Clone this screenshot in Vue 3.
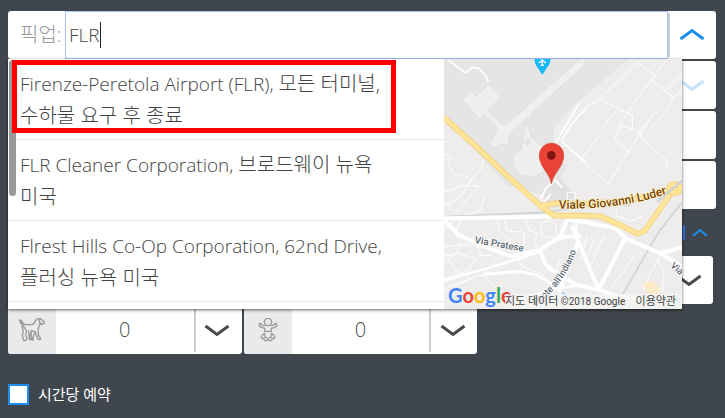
<script setup>
import { ref } from 'vue'

const query = ref('FLR')
const hourly = ref(false)
const places = [
  { name: 'Firenze-Peretola Airport (FLR),', detail: '모든 터미널, 수하물 요구 후 종료' },
  { name: 'FLR Cleaner Corporation,', detail: '브로드웨이 뉴욕 미국' },
  { name: 'Flrest Hills Co-Op Corporation, 62nd Drive,', detail: '플러싱 뉴욕 미국' },
]
</script>

<template>
  <main class="booking">
    <div class="rows">
      <div class="row pickup">
        <label class="caption" for="pickup">픽업:</label>
        <div class="field">
          <input id="pickup" v-model="query" type="text" autocomplete="off" />
          <span class="caret"></span>
        </div>
        <button class="toggle blue" type="button" aria-label="접기">
          <svg class="chevron" viewBox="0 0 26 14"><path d="M1.5 11 13 2.5 24.500 11" /></svg>
        </button>

        <div class="dropdown">
          <ul class="places">
            <li v-for="(place, i) in places" :key="place.name" :class="{ marked: i === 0 }">
              <a href="#">{{ place.name }} <span class="detail">{{ place.detail }}</span></a>
            </li>
          </ul>
          <span class="thumb"></span>
          <div class="map">
            <svg class="canvas" viewBox="0 0 714 750" preserveAspectRatio="xMidYMid slice">
              <rect width="714" height="750" fill="#eeedec" />
              <!-- airfield -->
              <path d="M0 0H555L408 122 330 205 330 300 372 318 355 352 300 410 190 380 0 180Z" fill="#e5e5e5" />
              <path d="M300 400 340 350 395 410 345 445 300 450Z" fill="#e1e1e1" />
              <g fill="#efefef" stroke="#d9d9d9" stroke-width="2">
                <path d="M408 0 190 194 170 194 132 154 142 144 171 114 135 76 96 112 80 97 56 122 106 180 122 168 160 206 143 246 131 252 148 266 175 256 194 255 210 286 208 318 230 350 278 352 318 322 319 285 300 266 262 235 250 195 267 158 423 17V0Z" />
                <path d="M252 174 196 226 196 255 214 284 232 272 238 230Z" fill="#e5e5e5" />
                <path d="M250 238 244 252 252 260 256 246Z" fill="#e5e5e5" />
              </g>
              <path d="M12 3 64 41 85 26 105 28 126 51 133 70M335 252 406 133M353 248Q380 188 425 152M353 248 425 310" class="lane wide" />
              <!-- side streets -->
              <path class="lane" d="M0 285 20 293 14 322 34 350 60 345 75 361M118 300 113 330 90 350 72 378 45 418 0 440M0 400 60 378 105 382 35 460 0 425M145 390 120 415 110 455 70 470M0 510 50 470 80 462M0 562 80 557 140 540M55 475 35 520 52 560 30 590 10 600 30 630 80 660M0 592 40 582 95 600 72 635 0 660M100 558 110 590 140 588 160 600M160 482 168 520 200 546M180 480 190 515 240 520 242 555M245 478 255 515 280 522 270 555 285 575M220 590 232 622 300 650M40 680 100 650 240 640M150 605 120 650 170 700M0 690 90 655" />
              <path class="lane" d="M408 155 466 120 581 11 630 47M662 8 555 153 520 210M621 60 690 117 714 90M670 90 714 43M690 117 670 155 615 213M466 120 565 170 565 212M515 155 470 213M408 305 462 235M414 303 493 377 552 278 640 150M560 282 510 239 532 200 580 215 610 255 673 308 662 332M610 188 580 225M370 430 370 400 394 400 394 430M520 450 515 470 560 487 600 470" />
              <path class="lane" d="M295 490Q335 478 338 510Q335 548 300 532Q280 510 300 492M310 550 360 540 350 500M350 600 335 640M400 480 450 500 530 512M430 530 410 600M450 540 425 610M480 530 440 620M570 590 500 690M600 690 620 640 650 590M640 600 660 640 655 700" />
              <!-- railway -->
              <path d="M0 473 300 460 420 442 560 438M714 430 640 525 534 710 508 750" fill="none" stroke="#d0d3d5" stroke-width="5" />
              <!-- main streets -->
              <path d="M0 478 370 472M0 482 42 526 110 558 200 592 288 573 348 533 370 482M383 500 463 690M546 533 463 693M403 548 378 610 345 700M288 573 303 613 330 640 398 678 463 692 520 712 600 720M370 482 430 490 513 508 546 538 648 583 714 623M340 535 410 530M648 583 714 565" fill="none" stroke="#fff" stroke-width="12" stroke-linejoin="round" />
              <path d="M0 665 150 622 290 578M120 645 225 636 280 650 350 690M230 720 330 690 400 680M395 490 400 550" fill="none" stroke="#fff" stroke-width="8" stroke-linejoin="round" />
              <!-- highways -->
              <g fill="none" stroke-linejoin="round">
                <path class="edge" d="M0 176 100 266 202 362 296 446 330 470 430 470 470 472 545 506 580 524 602 516 678 407 714 378M290 440 340 432 430 434Q560 428 672 395" />
                <path class="core" d="M0 176 100 266 202 362 296 446 330 470 430 470 470 472 545 506 580 524 602 516 678 407 714 378M290 440 340 432 430 434Q560 428 672 395" />
                <ellipse class="edge" cx="692" cy="389" rx="17" ry="13" />
                <ellipse class="core" cx="692" cy="389" rx="17" ry="13" />
                <path d="M640 428 714 365" stroke="#cfd1d4" stroke-width="7" />
              </g>
              <path d="M290 420 308 385 330 368M300 430 320 405M330 360 355 385" fill="none" stroke="#fff" stroke-width="6" />
              <path d="M598 672 625 665 648 690 640 710 610 700Z" fill="#fdebc8" />
              <path d="M355 700 372 716" stroke="#9dcdfa" stroke-width="5" />
              <!-- labels -->
              <g class="names">
                <path id="viale" d="M344 449Q540 452 674 402" fill="none" stroke="none" />
                <text class="highway" font-size="36"><textPath href="#viale">Viale Giovanni Luder</textPath></text>
                <text class="street" transform="translate(91 552) rotate(10)" font-size="29">Via Pratese</text>
                <path id="indiano" d="M230 764Q350 708 396 576" fill="none" stroke="none" />
                <text class="street" font-size="28" text-anchor="end"><textPath href="#indiano" startOffset="100%">Ponte all'Indiano</textPath></text>
                <text class="street" transform="translate(678 622) rotate(42)" font-size="28">Via</text>
              </g>
              <!-- airport badge -->
              <path d="M272 0H319Q320 14 310 25L295 47 280 25Q271 14 272 0Z" fill="#16b9f5" />
              <path d="M295 -2V20M284 12 295 4 306 12M290 19H300" fill="none" stroke="#fff" stroke-width="4" />
              <!-- marker -->
              <path d="M322 374C320 345 286 325 286 289A36 36 0 0 1 359 289C359 325 325 345 323 374Z" fill="#ea4335" stroke="#c93c2c" stroke-width="2" />
              <circle cx="322" cy="289" r="13" fill="#811411" />
            </svg>
            <div class="credits">
              <span class="google"><b class="g1">G</b><b class="g2">o</b><b class="g3">o</b><b class="g1">g</b><b class="g4">l</b><b class="g2">e</b></span>
              <span class="notice"><span class="korean">지도 데이터</span> ©2018 Google</span>
              <a class="terms korean" href="#">이용약관</a>
            </div>
          </div>
        </div>
      </div>

      <div class="row">
        <button class="toggle pale" type="button" aria-label="펼치기">
          <svg class="chevron" viewBox="0 0 26 14"><path d="M1.500 3 13 11.500 24.500 3" /></svg>
        </button>
      </div>
      <div class="row"></div>
      <div class="row"></div>
    </div>

    <div class="more">
      <button class="less" type="button" aria-label="옵션 접기">
        <span class="bar"></span>
        <svg class="small" viewBox="0 0 16 10"><path d="M1 8 8 2 15 8" /></svg>
      </button>
    </div>

    <div class="counters">
      <div class="counter last">
        <button class="toggle" type="button" aria-label="선택">
          <svg class="chevron" viewBox="0 0 26 14"><path d="M1.500 3 13 11.500 24.500 3" /></svg>
        </button>
      </div>
      <div class="counter">
        <span class="icon">
          <svg class="glyph" viewBox="0 0 78 72">
            <path d="M2 7Q7 3 9 11Q13 20 23 20H39Q46 18 50 7Q55 1 64 2Q68 3 70 8L77 11Q77 17 71 18L62 19Q59 29 57 36L59 53Q64 58 65 63L58 65Q53 57 49 42Q43 40 37 38L34 53 39 61Q37 66 31 64L29 38M23 39 20 50 24 64Q20 69 14 67L10 52 13 38Q8 30 10 21Q3 16 2 7ZM64 5Q58 7 62 14L69 18M37 39 36 65 43 66 42 58 48 42" />
          </svg>
        </span>
        <output class="value">0</output>
        <button class="toggle" type="button" aria-label="반려동물 수">
          <svg class="chevron" viewBox="0 0 26 14"><path d="M1.500 3 13 11.500 24.500 3" /></svg>
        </button>
      </div>
      <div class="counter">
        <span class="icon">
          <svg class="glyph" viewBox="0 0 78 72">
            <circle cx="39" cy="12" r="11" />
            <path d="M31 23 22 22 18 17Q14 14 13 19Q12 26 19 28L29 31V40H49V31L60 28Q67 24 65 19Q62 14 59 18L55 22 47 23M29 45 19 56Q18 61 25 62L32 69 39 66 46 69 54 62Q61 60 59 55L49 45M29 45Q27 55 39 64Q51 55 49 45M26 60 33 56M52 60 45 56" />
          </svg>
        </span>
        <output class="value">0</output>
        <button class="toggle" type="button" aria-label="유아 수">
          <svg class="chevron" viewBox="0 0 26 14"><path d="M1.500 3 13 11.500 24.500 3" /></svg>
        </button>
      </div>
    </div>

    <label class="hourly">
      <input v-model="hourly" type="checkbox" />
      <span>시간당 예약</span>
    </label>
  </main>
</template>

<style>
body {
  background: #40464d;
}
</style>

<style scoped>
.booking {
  padding: 11px 9px 12px 8px;
  font-family: "Open Sans", "Noto Sans CJK KR", sans-serif;
  font-weight: 300;
  font-size: 19px;
  color: #4a4a4a;
}
.booking * {
  box-sizing: border-box;
}
button {
  padding: 0;
  border: 0;
  background: none;
  font: inherit;
}
.rows {
  display: grid;
  gap: 2px;
}
.row {
  position: relative;
  display: flex;
  justify-content: flex-end;
  height: 48px;
  border-radius: 3px;
  background: #fff;
}
.caption {
  width: 57px;
  padding-left: 12px;
  font-size: 20px;
  line-height: 48px;
  color: #999;
  white-space: nowrap;
}
.field {
  position: relative;
  flex: 1;
  min-width: 0;
}
.field input {
  display: block;
  width: 100%;
  height: 48px;
  padding: 0 3px;
  border: 1px solid #a5c3fa;
  outline: 0;
  background: #fff;
  font: inherit;
  color: #444;
}
.caret {
  position: absolute;
  top: 11px;
  left: 35px;
  width: 1px;
  height: 26px;
  background: #222;
}
.toggle {
  display: flex;
  flex: none;
  align-items: center;
  justify-content: center;
  width: 48px;
  margin: 2px 0;
  padding-right: 3px;
  border-left: 2px solid #ccc;
  color: #4a4a4a;
}
.blue {
  color: #1e8ff0;
}
.pale {
  color: #c5e1fa;
}
.chevron {
  width: 26px;
  height: 14px;
  fill: none;
  stroke: currentColor;
  stroke-width: 3;
}
.dropdown {
  position: absolute;
  z-index: 2;
  top: 48px;
  right: 34px;
  left: 0;
  display: grid;
  grid-template-columns: minmax(0, 1fr) 238px;
  height: 250px;
  background: #fff;
  box-shadow: 0 1px 3px #0009;
}
.places {
  overflow: hidden;
  margin: 0;
  padding: 0;
  list-style: none;
}
.places li {
  position: relative;
  padding: 9px 48px 7px 12px;
  border-bottom: 1px solid #e8e8e8;
  line-height: 32px;
  word-break: keep-all;
}
.places a {
  color: #444;
  text-decoration: none;
}
.detail {
  font-size: 20px;
  line-height: 1;
}
.marked::after {
  content: "";
  position: absolute;
  z-index: 1;
  inset: 1px 48px 6px 4px;
  border: 5px solid #f00;
}
.thumb {
  position: absolute;
  top: 1px;
  left: 1px;
  width: 7px;
  height: 136px;
  border-radius: 4px;
  background: #999;
}
.map {
  position: relative;
  overflow: hidden;
}
.canvas {
  display: block;
  width: 100%;
  height: 100%;
}
.lane {
  fill: none;
  stroke: #fff;
  stroke-width: 3;
}
.wide {
  stroke-width: 5;
}
.edge {
  stroke: #f3d179;
  stroke-width: 17;
}
.core {
  stroke: #ffe599;
  stroke-width: 12;
}
.names {
  font-family: Roboto, sans-serif;
  font-weight: 500;
  paint-order: stroke;
  stroke-linejoin: round;
}
.highway {
  fill: #7b4400;
  stroke: #fff3d0;
  stroke-width: 5;
}
.street {
  fill: #5b6770;
  stroke: #fff;
  stroke-width: 5;
}
.credits {
  position: absolute;
  right: 0;
  bottom: 0;
  left: 0;
  display: flex;
  align-items: flex-end;
  padding-left: 4px;
  font: 400 10px/15px Roboto, "Noto Sans CJK KR", sans-serif;
  color: #444;
}
.korean {
  font-size: 11px;
  line-height: 15px;
}
.google {
  width: 57px;
  font: 400 20px/28px Lato, sans-serif;
}
.google b {
  font-weight: 700;
}
.g1 {
  color: #4285f4;
}
.g2 {
  color: #ea4335;
}
.g3 {
  color: #fbbc05;
}
.g4 {
  color: #34a853;
}
.notice {
  flex: 1;
  background: #f5f5f5b3;
  white-space: nowrap;
}
.terms {
  padding-right: 6px;
  background: #f5f5f5b3;
  color: #444;
  text-decoration: none;
}
.more {
  display: flex;
  justify-content: flex-end;
  padding: 15px 8px 15px 0;
}
.less {
  display: flex;
  align-items: center;
  gap: 7px;
  height: 17px;
  color: #1e8ff0;
}
.bar {
  width: 2px;
  height: 15px;
  background: #2b6fe0;
}
.small {
  width: 16px;
  height: 10px;
  fill: none;
  stroke: currentColor;
  stroke-width: 2;
}
.counters {
  display: grid;
  grid-template-columns: repeat(3, 1fr);
  gap: 2px;
  margin-right: 3px;
}
.counter {
  display: flex;
  height: 48px;
  overflow: hidden;
  border-radius: 3px;
  background: #fff;
}
.last {
  grid-column: 3;
  justify-content: flex-end;
}
.icon {
  display: flex;
  flex: none;
  align-items: center;
  justify-content: center;
  width: 48px;
  background: #e9eaec;
}
.glyph {
  width: 26px;
  height: 24px;
  fill: none;
  stroke: #999;
  stroke-width: 4;
  stroke-linejoin: round;
}
.value {
  flex: 1;
  font-size: 20px;
  line-height: 48px;
  text-align: center;
}
.hourly {
  display: flex;
  align-items: center;
  gap: 9px;
  width: max-content;
  margin-top: 30px;
  font-weight: 400;
  font-size: 15px;
  line-height: 21px;
  color: #fff;
}
.hourly input {
  appearance: none;
  width: 21px;
  height: 21px;
  margin: 0;
  border: 2px solid #1e8ff0;
  background: #fff;
}
</style>
